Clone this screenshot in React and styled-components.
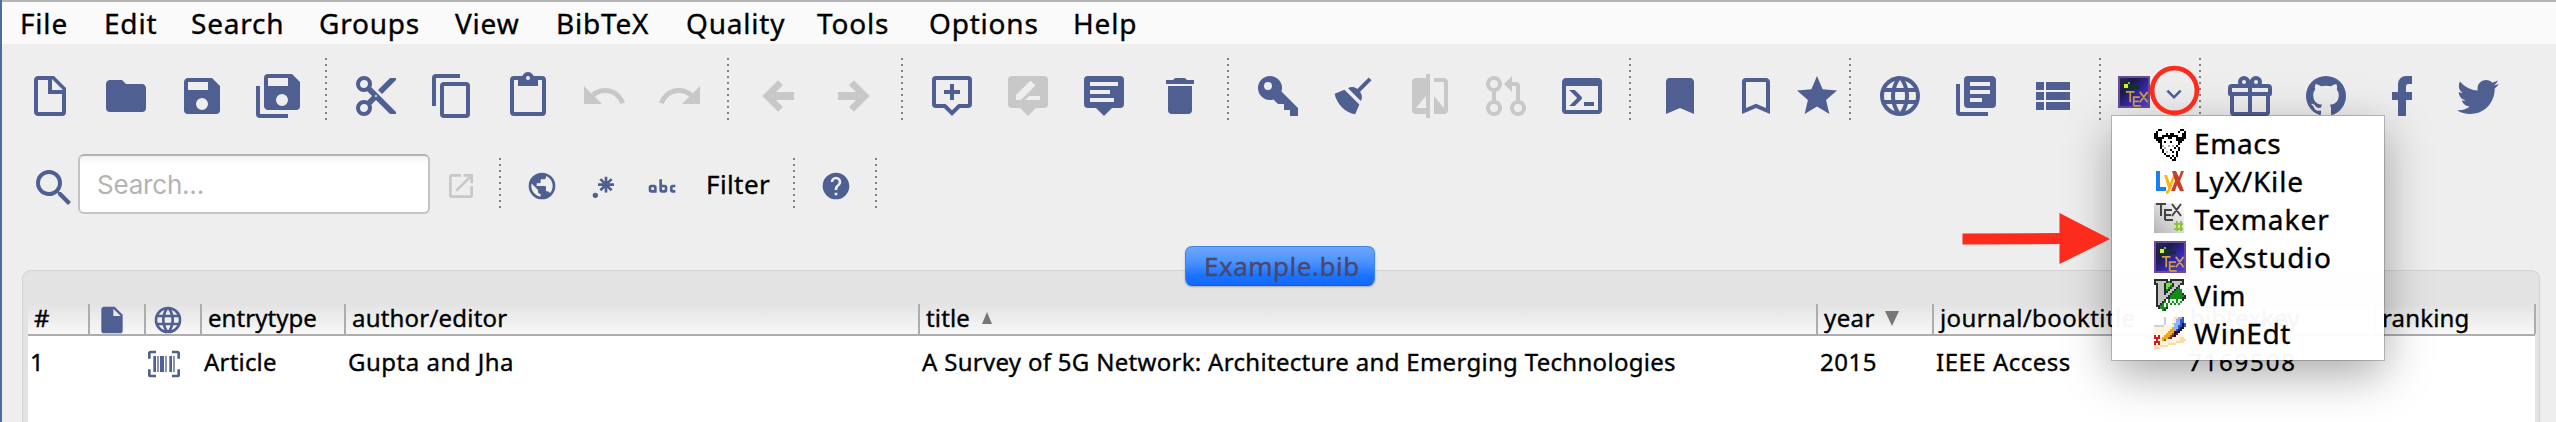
import React from 'react';
import styled, { createGlobalStyle, css } from 'styled-components';

const BLUE = '#4f5f92';
const GREY = '#c8c8c8';

const Global = createGlobalStyle`
  * { box-sizing: border-box; }
  html, body { margin: 0; padding: 0; overflow: hidden; }
  body { background: #eeeeee; font-family: "Noto Sans", "Open Sans", sans-serif; color: #000; }
`;

/* ---------- icon paths, 24-unit grid ---------- */
const P = {
  file: 'M13,9H18.5L13,3.5V9M6,2H14L20,8V20A2,2 0 0,1 18,22H6C4.89,22 4,21.1 4,20V4C4,2.89 4.89,2 6,2M11,4H6V20H18V11H11V4Z',
  fileSolid: 'M13,9V3.5L18.5,9M6,2C4.89,2 4,2.89 4,4V20A2,2 0 0,0 6,22H18A2,2 0 0,0 20,20V8L14,2H6Z',
  folder: 'M10,4H4C2.89,4 2,4.89 2,6V18A2,2 0 0,0 4,20H20A2,2 0 0,0 22,18V8C22,6.89 21.1,6 20,6H12L10,4Z',
  save: 'M15,9H5V5H15M12,19A3,3 0 0,1 9,16A3,3 0 0,1 12,13A3,3 0 0,1 15,16A3,3 0 0,1 12,19M17,3H5C3.89,3 3,3.9 3,5V19A2,2 0 0,0 5,21H19A2,2 0 0,0 21,19V7L17,3Z',
  saveAll: 'M17,7V3H7V7H17M14,17A3,3 0 0,0 17,14A3,3 0 0,0 14,11A3,3 0 0,0 11,14A3,3 0 0,0 14,17M19,1L23,5V17A2,2 0 0,1 21,19H7C5.89,19 5,18.1 5,17V3A2,2 0 0,1 7,1H19M1,7H3V21H17V23H3A2,2 0 0,1 1,21V7Z',
  cut: 'M19,3L13,9L15,11L22,4V3M12,12.5A0.5,0.5 0 0,1 11.5,12A0.5,0.5 0 0,1 12,11.5A0.5,0.5 0 0,1 12.5,12A0.5,0.5 0 0,1 12,12.5M6,20A2,2 0 0,1 4,18C4,16.89 4.9,16 6,16A2,2 0 0,1 8,18C8,19.11 7.1,20 6,20M6,8A2,2 0 0,1 4,6C4,4.89 4.9,4 6,4A2,2 0 0,1 8,6C8,7.11 7.1,8 6,8M9.64,7.64C9.87,7.14 10,6.59 10,6A4,4 0 0,0 6,2A4,4 0 0,0 2,6A4,4 0 0,0 6,10C6.59,10 7.14,9.87 7.64,9.64L10,12L7.64,14.36C7.14,14.13 6.59,14 6,14A4,4 0 0,0 2,18A4,4 0 0,0 6,22A4,4 0 0,0 10,18C10,17.41 9.87,16.86 9.64,16.36L12,14L19,21H22V20L9.64,7.64Z',
  copy: 'M19,21H8V7H19M19,5H8A2,2 0 0,0 6,7V21A2,2 0 0,0 8,23H19A2,2 0 0,0 21,21V7A2,2 0 0,0 19,5M16,1H4A2,2 0 0,0 2,3V17H4V3H16V1Z',
  paste: 'M19,20H5V4H7V7H17V4H19M12,2A1,1 0 0,1 13,3A1,1 0 0,1 12,4A1,1 0 0,1 11,3A1,1 0 0,1 12,2M19,2H14.82C14.4,0.84 13.3,0 12,0C10.7,0 9.6,0.84 9.18,2H5A2,2 0 0,0 3,4V20A2,2 0 0,0 5,22H19A2,2 0 0,0 21,20V4A2,2 0 0,0 19,2Z',
  undo: 'M12.5,8C9.85,8 7.45,9 5.6,10.6L2,7V16H11L7.38,12.38C8.77,11.22 10.54,10.5 12.5,10.5C16.04,10.5 19.05,12.81 20.1,16L22.47,15.22C21.08,11.03 17.15,8 12.5,8Z',
  redo: 'M18.4,10.6C16.55,9 14.15,8 11.5,8C6.85,8 2.92,11.03 1.54,15.22L3.9,16C4.95,12.81 7.95,10.5 11.5,10.5C13.45,10.5 15.23,11.22 16.62,12.38L13,16H22V7L18.4,10.6Z',
  left: 'M20,10V14H11L14.5,17.5L12.08,19.92L4.16,12L12.08,4.08L14.5,6.5L11,10H20Z',
  right: 'M4,10V14H13L9.5,17.5L11.92,19.92L19.84,12L11.92,4.08L9.5,6.5L13,10H4Z',
  tipPlus: 'M4,2H20A2,2 0 0,1 22,4V16A2,2 0 0,1 20,18H16L12,22L8,18H4A2,2 0 0,1 2,16V4A2,2 0 0,1 4,2M4,4V16H8.83L12,19.17L15.17,16H20V4H4M11,6H13V9H16V11H13V14H11V11H8V9H11V6Z',
  tipEdit: 'M4,2H20A2,2 0 0,1 22,4V16A2,2 0 0,1 20,18H16L12,22L8,18H4A2,2 0 0,1 2,16V4A2,2 0 0,1 4,2M6,14H8.5L15.35,7.12C15.55,6.93 15.55,6.61 15.35,6.41L13.59,4.65C13.39,4.45 13.07,4.45 12.88,4.65L6,11.53V14M18,14V12H12.5L10.5,14H18Z',
  tipText: 'M4,2H20A2,2 0 0,1 22,4V16A2,2 0 0,1 20,18H16L12,22L8,18H4A2,2 0 0,1 2,16V4A2,2 0 0,1 4,2M5,5V7H19V5H5M5,9V11H15V9H5M5,13V15H17V13H5Z',
  trash: 'M19,4H15.5L14.5,3H9.5L8.5,4H5V6H19M6,19A2,2 0 0,0 8,21H16A2,2 0 0,0 18,19V7H6V19Z',
  key: 'M22,18V22H18V19H15V16H12L9.74,13.74C9.19,13.91 8.61,14 8,14A6,6 0 0,1 2,8A6,6 0 0,1 8,2A6,6 0 0,1 14,8C14,8.61 13.91,9.19 13.74,9.74L22,18M7,5A2,2 0 0,0 5,7A2,2 0 0,0 7,9A2,2 0 0,0 9,7A2,2 0 0,0 7,5Z',
  broom: 'M19.36,2.72L20.78,4.14L15.06,9.85C16.13,11.39 16.28,13.24 15.38,14.44L9.06,8.12C10.26,7.22 12.11,7.37 13.65,8.44L19.36,2.72M5.93,17.57C3.92,15.56 2.69,13.16 2.35,10.92L7.23,8.83L14.67,16.27L12.58,21.15C10.34,20.81 7.94,19.58 5.93,17.57Z',
  compare: 'M19,3H14V5H19V18L14,12V21H19A2,2 0 0,0 21,19V5C21,3.89 20.1,3 19,3M10,18H5L10,12M10,3H5C3.89,3 3,3.89 3,5V19A2,2 0 0,0 5,21H10V23H12V1H10V3Z',
  pull: 'M6,2A4,4 0 0,1 7,9.87V14.13A4,4 0 1,1 5,14.13V9.87A4,4 0 0,1 6,2M6,4A2,2 0 0,0 6,8A2,2 0 0,0 6,4M6,16A2,2 0 0,0 6,20A2,2 0 0,0 6,16M11,6L15,2V5H17A2,2 0 0,1 19,7V14.13A4,4 0 1,1 17,14.13V7H15V10L11,6M18,16A2,2 0 0,0 18,20A2,2 0 0,0 18,16Z',
  console: 'M20,19V7H4V19H20M20,3A2,2 0 0,1 22,5V19A2,2 0 0,1 20,21H4A2,2 0 0,1 2,19V5C2,3.89 2.9,3 4,3H20M13,17V15H18V17H13M9.58,13L5.57,9H8.4L11.7,12.3C12.09,12.69 12.09,13.33 11.7,13.72L8.42,17H5.59L9.58,13Z',
  mark: 'M17,3H7A2,2 0 0,0 5,5V21L12,18L19,21V5C19,3.89 18.1,3 17,3Z',
  markOutline: 'M17,18L12,15.82L7,18V5H17M17,3H7A2,2 0 0,0 5,5V21L12,18L19,21V5C19,3.89 18.1,3 17,3Z',
  star: 'M12,17.27L18.18,21L16.54,13.97L22,9.24L14.81,8.62L12,2L9.19,8.62L2,9.24L7.45,13.97L5.82,21L12,17.27Z',
  web: 'M16.36,14C16.44,13.34 16.5,12.68 16.5,12C16.5,11.32 16.44,10.66 16.36,10H19.74C19.9,10.64 20,11.31 20,12C20,12.69 19.9,13.36 19.74,14M14.59,19.56C15.19,18.45 15.65,17.25 15.97,16H18.92C17.96,17.65 16.43,18.93 14.59,19.56M14.34,14H9.66C9.56,13.34 9.5,12.68 9.5,12C9.5,11.32 9.56,10.65 9.66,10H14.34C14.43,10.65 14.5,11.32 14.5,12C14.5,12.68 14.43,13.34 14.34,14M12,19.96C11.17,18.76 10.5,17.43 10.09,16H13.91C13.5,17.43 12.83,18.76 12,19.96M8,8H5.08C6.03,6.34 7.57,5.06 9.4,4.44C8.8,5.55 8.35,6.75 8,8M5.08,16H8C8.35,17.25 8.8,18.45 9.4,19.56C7.57,18.93 6.03,17.65 5.08,16M4.26,14C4.1,13.36 4,12.69 4,12C4,11.31 4.1,10.64 4.26,10H7.64C7.56,10.66 7.5,11.32 7.5,12C7.5,12.68 7.56,13.34 7.64,14M12,4.03C12.83,5.23 13.5,6.57 13.91,8H10.09C10.5,6.57 11.17,5.23 12,4.03M18.92,8H15.97C15.65,6.75 15.19,5.55 14.59,4.44C16.43,5.07 17.96,6.34 18.92,8M12,2C6.47,2 2,6.5 2,12A10,10 0 0,0 12,22A10,10 0 0,0 22,12A10,10 0 0,0 12,2Z',
  library: 'M19,7H9V5H19M15,15H9V13H15M19,11H9V9H19M20,2H8A2,2 0 0,0 6,4V16A2,2 0 0,0 8,18H20A2,2 0 0,0 22,16V4C22,2.89 21.1,2 20,2M4,6H2V20A2,2 0 0,0 4,22H18V20H4V6Z',
  list: 'M9,5V9H21V5M9,19H21V15H9M9,14H21V10H9M4,9H8V5H4M4,19H8V15H4M4,14H8V10H4V14Z',
  chevron: 'M7.41,8.58L12,13.17L16.59,8.58L18,10L12,16L6,10L7.41,8.58Z',
  gift: 'M22,12V20A2,2 0 0,1 20,22H4A2,2 0 0,1 2,20V12A1,1 0 0,1 1,11V8A2,2 0 0,1 3,6H6.17C6.06,5.69 6,5.35 6,5A3,3 0 0,1 9,2C10,2 10.88,2.5 11.43,3.24V3.23L12,4L12.57,3.23V3.24C13.12,2.5 14,2 15,2A3,3 0 0,1 18,5C18,5.35 17.94,5.69 17.83,6H21A2,2 0 0,1 23,8V11A1,1 0 0,1 22,12M4,20H11V12H4V20M20,20V12H13V20H20M9,4A1,1 0 0,0 8,5A1,1 0 0,0 9,6A1,1 0 0,0 10,5A1,1 0 0,0 9,4M15,4A1,1 0 0,0 14,5A1,1 0 0,0 15,6A1,1 0 0,0 16,5A1,1 0 0,0 15,4M3,8V10H11V8H3M13,8V10H21V8H13Z',
  github: 'M12,2A10,10 0 0,0 2,12C2,16.42 4.87,20.17 8.84,21.5C9.34,21.58 9.5,21.27 9.5,21C9.5,20.77 9.5,20.14 9.5,19.31C6.73,19.91 6.14,17.97 6.14,17.97C5.68,16.81 5.03,16.5 5.03,16.5C4.12,15.88 5.1,15.9 5.1,15.9C6.1,15.97 6.63,16.93 6.63,16.93C7.5,18.45 8.97,18 9.54,17.76C9.63,17.11 9.89,16.67 10.17,16.42C7.95,16.17 5.62,15.31 5.62,11.5C5.62,10.39 6,9.5 6.65,8.79C6.55,8.54 6.2,7.5 6.75,6.15C6.75,6.15 7.59,5.88 9.5,7.17C10.29,6.95 11.15,6.84 12,6.84C12.85,6.84 13.71,6.95 14.5,7.17C16.41,5.88 17.25,6.15 17.25,6.15C17.8,7.5 17.45,8.54 17.35,8.79C18,9.5 18.38,10.39 18.38,11.5C18.38,15.32 16.04,16.16 13.81,16.41C14.17,16.72 14.5,17.33 14.5,18.26C14.5,19.6 14.5,20.68 14.5,21C14.5,21.27 14.66,21.59 15.17,21.5C19.14,20.16 22,16.42 22,12A10,10 0 0,0 12,2Z',
  facebook: 'M17,2V6H15C14.31,6 14,6.81 14,7.5V10H17V14H14V22H10V14H7V10H10V6A4,4 0 0,1 14,2H17Z',
  twitter: 'M22.46,6C21.69,6.35 20.86,6.58 20,6.69C20.88,6.16 21.56,5.32 21.88,4.31C21.05,4.81 20.13,5.16 19.16,5.36C18.37,4.5 17.26,4 16,4C13.65,4 11.73,5.92 11.73,8.29C11.73,8.63 11.77,8.96 11.84,9.27C8.28,9.09 5.11,7.38 3,4.79C2.63,5.42 2.42,6.16 2.42,6.94C2.42,8.43 3.17,9.75 4.33,10.5C3.62,10.5 2.96,10.3 2.38,10V10.03C2.38,12.11 3.86,13.85 5.82,14.24C5.46,14.34 5.08,14.39 4.69,14.39C4.42,14.39 4.15,14.36 3.89,14.31C4.43,16 6,17.26 7.89,17.29C6.43,18.45 4.58,19.13 2.56,19.13C2.22,19.13 1.88,19.11 1.54,19.07C3.44,20.29 5.7,21 8.12,21C16,21 20.33,14.46 20.33,8.79C20.33,8.6 20.33,8.42 20.32,8.23C21.16,7.63 21.88,6.87 22.46,6Z',
  search: 'M9.5,3A6.5,6.5 0 0,1 16,9.5C16,11.11 15.41,12.59 14.44,13.73L14.71,14H15.5L20.5,19L19,20.5L14,15.5V14.71L13.73,14.44C12.59,15.41 11.11,16 9.5,16A6.5,6.5 0 0,1 3,9.5A6.5,6.5 0 0,1 9.5,3M9.5,5C7,5 5,7 5,9.5C5,12 7,14 9.5,14C12,14 14,12 14,9.5C14,7 12,5 9.5,5Z',
  open: 'M14,3V5H17.59L7.76,14.83L9.17,16.24L19,6.41V10H21V3M19,19H5V5H12V3H5C3.89,3 3,3.9 3,5V19A2,2 0 0,0 5,21H19A2,2 0 0,0 21,19V12H19V19Z',
  earth: 'M17.9,17.39C17.64,16.59 16.89,16 16,16H15V13A1,1 0 0,0 14,12H8V10H10A1,1 0 0,0 11,9V7H13A2,2 0 0,0 15,5V4.59C17.93,5.77 20,8.64 20,12C20,14.08 19.2,15.97 17.9,17.39M11,19.93C7.05,19.44 4,16.08 4,12C4,11.38 4.08,10.78 4.21,10.21L9,15V16A2,2 0 0,0 11,18M12,2A10,10 0 0,0 2,12A10,10 0 0,0 12,22A10,10 0 0,0 22,12A10,10 0 0,0 12,2Z',
  regex: 'M16,16.92C15.67,16.97 15.34,17 15,17C14.66,17 14.33,16.97 14,16.92V13.41L11.5,15.89C11,15.5 10.5,15 10.11,14.5L12.59,12H9.08C9.03,11.67 9,11.34 9,11C9,10.66 9.03,10.33 9.08,10H12.59L10.11,7.5C10.3,7.25 10.5,7 10.76,6.76C11,6.5 11.25,6.3 11.5,6.11L14,8.59V5.08C14.33,5.03 14.66,5 15,5C15.34,5 15.67,5.03 16,5.08V8.59L18.5,6.11C19,6.5 19.5,7 19.89,7.5L17.41,10H20.92C20.97,10.33 21,10.66 21,11C21,11.34 20.97,11.67 20.92,12H17.41L19.89,14.5C19.7,14.75 19.5,15 19.24,15.24C19,15.5 18.75,15.7 18.5,15.89L16,13.41V16.92M5,19A2,2 0 0,1 7,17A2,2 0 0,1 9,19A2,2 0 0,1 7,21A2,2 0 0,1 5,19Z',
  abc: 'M6,11A2,2 0 0,1 8,13V17H4A2,2 0 0,1 2,15V13A2,2 0 0,1 4,11H6M4,13V15H6V13H4M20,13V15H22V17H20A2,2 0 0,1 18,15V13A2,2 0 0,1 20,11H22V13H20M12,7V11H14A2,2 0 0,1 16,13V15A2,2 0 0,1 14,17H12A2,2 0 0,1 10,15V7H12M12,15H14V13H12V15Z',
  help: 'M15.07,11.25L14.17,12.17C13.45,12.89 13,13.5 13,15H11V14.5C11,13.39 11.45,12.39 12.17,11.67L13.41,10.41C13.78,10.05 14,9.55 14,9C14,7.89 13.1,7 12,7A2,2 0 0,0 10,9H8A4,4 0 0,1 12,5A4,4 0 0,1 16,9C16,9.88 15.64,10.67 15.07,11.25M13,19H11V17H13M12,2A10,10 0 0,0 2,12A10,10 0 0,0 12,22A10,10 0 0,0 22,12C22,6.47 17.5,2 12,2Z',
  barcode: 'M4,6H6V18H4V6M7,6H8V18H7V6M9,6H12V18H9V6M13,6H14V18H13V6M16,6H18V18H16V6M19,6H20V18H19V6M2,4V8H0V4A2,2 0 0,1 2,2H6V4H2M22,2A2,2 0 0,1 24,4V8H22V4H18V2H22M2,16V20H6V22H2A2,2 0 0,1 0,20V16H2M22,20V16H24V20A2,2 0 0,1 22,22H18V20H22Z',
};

const Svg = styled.svg`
  display: block;
  flex: none;
  fill: ${(p) => (p.$off ? GREY : BLUE)};
`;

function Icon({ name, size = 48, off }) {
  return (
    <Svg width={size} height={size} viewBox="0 0 24 24" fillRule="evenodd" $off={off}>
      <path d={P[name]} />
    </Svg>
  );
}

/* ---------- 16-pixel editor icons ---------- */
const EDITOR_PIXELS = {
  emacs: {
    colors: { '#': '#000', o: '#b0b0b0' },
    rows: [
      '..##.........##.',
      '.#..........#..#',
      '##....#.##....##',
      '##..########..##',
      '#####..##..#####',
      '.###.......####.',
      '..##.#..#...##..',
      '...#........#...',
      '...#o..o.o.#....',
      '...#.o....#.#...',
      '....#...#...#...',
      '....#.o..#.#....',
      '.....#.....#....',
      '......##.#.#....',
      '........#.#.....',
      '.........##.....',
    ],
  },
  vim: {
    colors: { '#': '#2b2b2b', g: '#0d8f17', l: '#6fe04a', s: '#c2c4c0', w: '#ffffff', d: '#666a66' },
    rows: [
      '#######.#######.',
      '#sssss#g#sssss#.',
      '##sss#lll#sss##.',
      '.#sss#llg#ss#...',
      '.#sss#lg#ss#g...',
      '.#sss#g#ss#ggg..',
      '.#sss##ss#gggg..',
      '.#sss#ss#ggggg#.',
      '.#sssss#ggggggg#',
      '.#ssss##gggggg##',
      '.#sss#wgwwwgww#.',
      '.#ss#gwgwgwgwgw.',
      '.#s#gwgwgwgwgw..',
      '.##ggwgw.w.w.w..',
      '..#dgg#.........',
      '....g#..........',
    ],
  },
  winedt: {
    colors: { c: '#fff3dc', o: '#fbdcae', b: '#2f56c8', l: '#8fb2f4', k: '#151540', y: '#f0a818', n: '#8a5a10', r: '#d81818', s: '#c9ced8', p: '#7a1028' },
    rows: [
      '.....s....oollb.',
      '.....s...ccllbb.',
      '.....s....cllbb.',
      '.....s...olllbkb',
      'sssss.ccccllbbkb',
      'cccccccccyllbkk.',
      'ccccccccyyybkk..',
      'cccccccyyykkk.c.',
      'ccccccyyynkpccc.',
      'rcrccyyynpkcccc.',
      'rrrcyyynpccccoo.',
      '.r.cyncccccccooo',
      'rrrccccccccoooo.',
      'r.rccccoooo.....',
      'oocoooo.........',
      'ooo.............',
    ],
  },
};

function PixelIcon({ kind }) {
  const { rows, colors } = EDITOR_PIXELS[kind];
  return (
    <Svg width="32" height="32" viewBox="0 0 16 16" shapeRendering="crispEdges">
      {rows.flatMap((row, y) =>
        [...row].map((c, x) =>
          colors[c] ? <rect key={`${x}-${y}`} x={x} y={y} width="1" height="1" fill={colors[c]} /> : null,
        ),
      )}
    </Svg>
  );
}

const Stroke = styled.path`
  fill: none;
  stroke: ${(p) => p.$color};
  stroke-width: 2;
`;

/* the TeX mark as a line drawing: bar and stem, lowered three-armed comb, cross */
const TEX_LINES = 'M1 1h10M6 1v12M10 6v11M10 7h7M10 12h6M10 17h8M17 1l9 12M26 1l-9 12';

function TexStudioIcon() {
  return (
    <Svg width="32" height="32" viewBox="0 0 32 32">
      <defs>
        <linearGradient id="night" x1="0" y1="0" x2="1" y2="1">
          <stop offset="0" stopColor="#2a2358" />
          <stop offset="0.3" stopColor="#1c1c48" />
          <stop offset="0.6" stopColor="#3426a6" />
          <stop offset="1" stopColor="#4a40e0" />
        </linearGradient>
      </defs>
      <rect width="32" height="32" fill="#6c4a9c" />
      <rect x="2" y="2" width="28" height="28" fill="url(#night)" />
      <path d="M4 6h6l6 4h6v3H12L6 14z" fill="#12351f" />
      <rect x="6" y="8" width="4" height="4" fill="#e2ea3a" />
      <rect x="10" y="6" width="2" height="2" fill="#58c46a" />
      <g transform="translate(7 15) scale(0.87)">
        <Stroke d={TEX_LINES} $color="#cfa040" />
      </g>
    </Svg>
  );
}

function TexmakerIcon() {
  return (
    <Svg width="32" height="32" viewBox="0 0 32 32">
      <defs>
        <linearGradient id="paper" x1="1" y1="0" x2="0" y2="1">
          <stop offset="0" stopColor="#ffffff" />
          <stop offset="1" stopColor="#b4b4b4" />
        </linearGradient>
      </defs>
      <rect width="30" height="30" fill="url(#paper)" />
      <g transform="translate(1 0)">
        <Stroke d={TEX_LINES} $color="#444" />
      </g>
      <path d="M22 18h2v10h-2zM26 18h2v10h-2zM20 20h9v2h-9zM20 25h9v2h-9z" fill="#8cc43c" />
    </Svg>
  );
}

function LyxIcon() {
  return (
    <Svg width="32" height="32" viewBox="0 0 32 32">
      <path d="M2 2h4v16h6v4H2z" fill="#1c7df2" />
      <path d="M10 6h3l3 8 3-8h3l-6 16q-1 3-4 3v-3q2 0 2-3z" fill="#fbb81c" />
      <path d="M18 2h4l3 6 2-6h3l-4 10 4 10h-4l-3-6-2 6h-4l4-10z" fill="#c8402a" />
    </Svg>
  );
}

/* ---------- window frame ---------- */
const Window = styled.div`
  position: relative;
  width: 2556px;
  height: 422px;
  display: flex;
  flex-direction: column;
  background: #eeeeee;
  border-left: 2px solid #4a6f9c;
  overflow: hidden;
  -webkit-text-stroke: 0.35px currentColor;
`;

const MenuBar = styled.nav`
  flex: none;
  display: flex;
  align-items: center;
  height: 44px;
  padding-left: 18px;
  background: #fafafa;
  border-top: 2px solid #b4b4b4;
`;

const MenuEntry = styled.span`
  flex: none;
  width: ${(p) => p.$w}px;
  font-size: 28px;
  line-height: 40px;
  letter-spacing: 0.8px;
  white-space: nowrap;
`;

const ToolBar = styled.div`
  flex: none;
  display: flex;
  height: 110px;
  padding: 14px 0 0 10px;
`;

const ToolGroup = styled.div`
  display: flex;
  height: 76px;
  align-items: center;
`;

const Tool = styled.div`
  flex: none;
  display: flex;
  justify-content: center;
  width: ${(p) => p.$w || 76}px;
`;

const Divider = styled.div`
  flex: none;
  width: 2px;
  height: ${(p) => p.$h || 62}px;
  margin: ${(p) => p.$m || '0 11px 0 9px'};
  background: repeating-linear-gradient(to bottom, #808080 0 2px, transparent 2px 6px);
`;

const PushGroup = styled(ToolGroup)`
  width: 78px;
  padding: 0 0 8px 6px;
`;

const Chevron = styled.div`
  margin: 3px 0 0 9px;
`;

const SearchBar = styled.div`
  flex: none;
  display: flex;
  align-items: flex-start;
  height: 60px;
  padding-left: 28px;
`;

const SearchField = styled.div`
  width: 352px;
  height: 60px;
  padding-left: 17px;
  border: 2px solid #c4c4c4;
  border-top-color: #b2b2b2;
  border-radius: 6px;
  background: linear-gradient(to bottom, #f1f1f1 0, #ffffff 7px);
  font-family: Inter, "Liberation Sans", sans-serif;
  font-size: 26px;
  line-height: 57px;
  letter-spacing: -0.2px;
  color: #b4b4b4;
  -webkit-text-stroke: 0;
`;

const SearchTool = styled.div`
  flex: none;
  width: ${(p) => p.$w || 60}px;
  padding-top: ${(p) => p.$top ?? 16}px;
  display: flex;
  justify-content: center;
`;

const FilterLabel = styled.span`
  width: 88px;
  padding-left: 14px;
  font-size: 26px;
  line-height: 60px;
  letter-spacing: 0.4px;
`;

/* ---------- library panel ---------- */
const Panel = styled.section`
  position: relative;
  flex: 1;
  margin: 56px 16px 0 20px;
  padding: 33px 4px 0 5px;
  border: 1px solid #d3d3d3;
  border-bottom: 0;
  border-radius: 9px 9px 0 0;
  background: #e3e3e3;
`;

const Tab = styled.div`
  position: absolute;
  left: 1162px;
  top: -25px;
  width: 190px;
  height: 40px;
  border-radius: 7px;
  border: 1px solid #3f82ea;
  border-bottom-color: #1258d8;
  background: linear-gradient(to bottom, #6ea7fc 0%, #4b91fd 40%, #1b73fe 75%, #1168ff 100%);
  box-shadow: 0 1px 2px rgba(0, 0, 0, 0.25);
  color: #48486c;
  font-size: 26px;
  line-height: 38px;
  letter-spacing: 0.5px;
  padding-left: 18px;
  white-space: nowrap;
`;

const Table = styled.div`
  display: flex;
  flex-direction: column;
  height: 118px;
  background: #fff;
`;

const rowGrid = css`
  display: grid;
  grid-template-columns: 62px 56px 56px 144px 574px 898px 116px 250px 192px 160px;
`;

const HeadRow = styled.div`
  ${rowGrid}
  height: 32px;
  background: linear-gradient(to bottom, #e3e3e3, #f8f8f8);
  border-bottom: 2px solid #adadad;
`;

const HeadCell = styled.div`
  display: flex;
  align-items: center;
  height: 30px;
  padding: ${(p) => (p.$icon ? '2px 0 0 6px' : '0 0 2px 6px')};
  border-right: 2px solid #adadad;
  font-size: 24px;
  line-height: 28px;
  letter-spacing: ${(p) => p.$ls ?? 0.15}px;
  white-space: nowrap;
`;

const Row = styled.div`
  ${rowGrid}
  height: 52px;
`;

const Cell = styled.div`
  display: flex;
  align-items: center;
  padding-left: ${(p) => p.$pl ?? 2}px;
  padding-top: ${(p) => p.$pt ?? 0}px;
  font-size: 24px;
  line-height: 52px;
  letter-spacing: ${(p) => p.$ls ?? 0.5}px;
  white-space: nowrap;
`;

const SortMark = styled.svg`
  flex: none;
  margin-left: ${(p) => p.$ml}px;
  fill: #777;
`;

/* ---------- overlay: editor menu and annotations ---------- */
const EditorMenu = styled.div`
  position: absolute;
  left: 2110px;
  top: 116px;
  width: 272px;
  height: 244px;
  padding: 8px 0 0 42px;
  background: rgba(255, 255, 255, 0.965);
  box-shadow: 0 0 0 1px rgba(0, 0, 0, 0.2), 0 14px 44px rgba(0, 0, 0, 0.34);
`;

const EditorItem = styled.div`
  display: flex;
  align-items: center;
  height: 38px;
  gap: 8px;
  font-size: 28px;
  line-height: 38px;
  letter-spacing: ${(p) => p.$ls}px;
  white-space: nowrap;
`;

const IconSlot = styled.div`
  width: 32px;
  height: 32px;
  margin-top: ${(p) => p.$mt}px;
`;

const Ring = styled.svg`
  position: absolute;
  left: 2146px;
  top: 64px;
`;

const Arrow = styled.svg`
  position: absolute;
  left: 1960px;
  top: 212px;
`;

const MENUS = [
  ['File', 84], ['Edit', 87], ['Search', 128], ['Groups', 136], ['View', 101],
  ['BibTeX', 130], ['Quality', 131], ['Tools', 112], ['Options', 144], ['Help', 100],
];

const GROUPS = [
  [['file'], ['folder'], ['save'], ['saveAll']],
  [['cut'], ['copy'], ['paste'], ['undo', 1], ['redo', 1]],
  [['left', 1], ['right', 1]],
  [['tipPlus'], ['tipEdit', 1], ['tipText'], ['trash']],
  [['key'], ['broom'], ['compare', 1], ['pull', 1], ['console']],
  [['mark'], ['markOutline'], ['star', 0, 46]],
  [['web'], ['library'], ['list']],
];

const EDITORS = [
  ['Emacs', <PixelIcon kind="emacs" />, 3, 0.6],
  ['LyX/Kile', <LyxIcon />, 8, 0.8],
  ['Texmaker', <TexmakerIcon />, 0, 1],
  ['TeXstudio', <TexStudioIcon />, 0, 1.1],
  ['Vim', <PixelIcon kind="vim" />, 0, 0.6],
  ['WinEdt', <PixelIcon kind="winedt" />, 0, 0.6],
];

export default function App() {
  return (
    <>
      <Global />
      <Window>
        <MenuBar>
          {MENUS.map(([label, w]) => (
            <MenuEntry key={label} $w={w}>{label}</MenuEntry>
          ))}
        </MenuBar>

        <ToolBar>
          {GROUPS.map((group, i) => (
            <React.Fragment key={i}>
              <ToolGroup>
                {group.map(([name, off, w]) => (
                  <Tool key={name} $w={w}><Icon name={name} off={!!off} /></Tool>
                ))}
              </ToolGroup>
              <Divider />
            </React.Fragment>
          ))}
          <PushGroup>
            <TexStudioIcon />
            <Chevron><Icon name="chevron" size={30} /></Chevron>
          </PushGroup>
          <Divider />
          <ToolGroup>
            {['gift', 'github', 'facebook', 'twitter'].map((name) => (
              <Tool key={name}><Icon name={name} /></Tool>
            ))}
          </ToolGroup>
        </ToolBar>

        <SearchBar>
          <SearchTool $w={48} $top={10}><Icon name="search" /></SearchTool>
          <SearchField>Search...</SearchField>
          <SearchTool $w={61}><Icon name="open" size={32} off /></SearchTool>
          <Divider $h={50} $m="4px 11px 0 8px" />
          <SearchTool><Icon name="earth" size={32} /></SearchTool>
          <SearchTool><Icon name="regex" size={32} /></SearchTool>
          <SearchTool><Icon name="abc" size={32} /></SearchTool>
          <FilterLabel>Filter</FilterLabel>
          <Divider $h={50} $m="4px 11px 0 13px" />
          <SearchTool><Icon name="help" size={32} /></SearchTool>
          <Divider $h={50} $m="4px 0 0 9px" />
        </SearchBar>

        <Panel>
          <Tab>Example.bib</Tab>
          <Table>
            <HeadRow>
              <HeadCell>#</HeadCell>
              <HeadCell $icon><Icon name="fileSolid" size={32} /></HeadCell>
              <HeadCell $icon><Icon name="web" size={32} /></HeadCell>
              <HeadCell $ls={0.05}>entrytype</HeadCell>
              <HeadCell $ls={0.2}>author/editor</HeadCell>
              <HeadCell>
                title
                <SortMark $ml={12} width="10" height="12" viewBox="0 0 10 12"><path d="M5 0l5 12H0z" /></SortMark>
              </HeadCell>
              <HeadCell $ls={0.4}>
                year
                <SortMark $ml={10} width="14" height="15" viewBox="0 0 14 15"><path d="M0 0h14L7 15z" /></SortMark>
              </HeadCell>
              <HeadCell $ls={0.4}>journal/booktitle</HeadCell>
              <HeadCell>bibtexkey</HeadCell>
              <HeadCell>ranking</HeadCell>
            </HeadRow>
            <Row>
              <Cell>1</Cell>
              <Cell />
              <Cell $pt={3}><Icon name="barcode" size={32} /></Cell>
              <Cell $ls={0.2}>Article</Cell>
              <Cell>Gupta and Jha</Cell>
              <Cell $ls={0.3}>A Survey of 5G Network: Architecture and Emerging Technologies</Cell>
              <Cell>2015</Cell>
              <Cell>IEEE Access</Cell>
              <Cell $pl={4} $ls={1.8}>7169508</Cell>
              <Cell />
            </Row>
          </Table>
        </Panel>

        <EditorMenu>
          {EDITORS.map(([label, icon, mt, ls]) => (
            <EditorItem key={label} $ls={ls}><IconSlot $mt={mt}>{icon}</IconSlot>{label}</EditorItem>
          ))}
        </EditorMenu>
        <Ring width="54" height="54" viewBox="0 0 54 54">
          <circle cx="26.5" cy="26.5" r="22.4" fill="none" stroke="#fd2b1c" strokeWidth="4.6" />
        </Ring>
        <Arrow width="150" height="54" viewBox="0 0 150 54">
          <path d="M0.5 21.5L97.5 21V1L148 27L97.5 52V32L0.5 32.5z" fill="#fd2b1c" />
        </Arrow>
      </Window>
    </>
  );
}
